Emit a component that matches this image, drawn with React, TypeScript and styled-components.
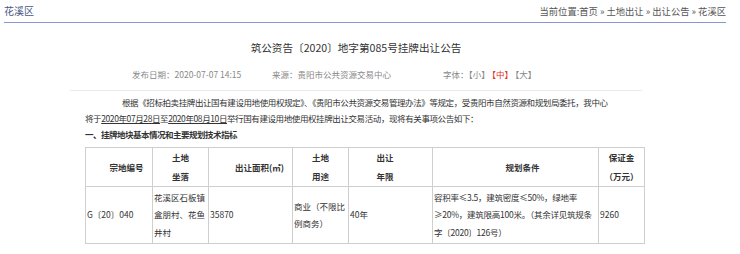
import React from "react";
import styled, { createGlobalStyle } from "styled-components";

const Global = createGlobalStyle`
  html, body { margin: 0; padding: 0; background: #fff; }
  body { font-family: "Noto Sans CJK SC", "Noto Sans", sans-serif; color: #333; }
`;

const Page = styled.div`
  width: 740px;
  height: 254px;
  overflow: hidden;
`;

const TopBar = styled.div`
  margin-left: 4px;
  width: 722px;
  height: 21px;
  display: flex;
  justify-content: space-between;
  align-items: center;
  border-bottom: 1px solid #8399cf;
  padding-bottom: 1px;
`;

const AreaName = styled.div`
  font-size: 10px;
  color: #4a5785;
  line-height: 16px;
`;

const Crumbs = styled.div`
  font-size: 9.3px;
  color: #555;
  line-height: 16px;
`;

const Article = styled.div`
  margin-left: 70px;
  width: 572px;
`;

const Title = styled.h1`
  margin: 17px 0 0;
  font-size: 10.6px;
  font-weight: normal;
  line-height: 16px;
  text-align: center;
  color: #333;
`;

const Meta = styled.div`
  margin-top: 10px;
  height: 16px;
  display: flex;
  align-items: center;
  padding-left: 62px;
  font-size: 8.5px;
  color: #888;
`;

const MetaItem = styled.span<{ $w: number }>`
  width: ${(p) => p.$w}px;
  white-space: nowrap;
`;

const SizeLink = styled.span<{ $active?: boolean }>`
  color: ${(p) => (p.$active ? "#e0301e" : "#888")};
  margin-right: 2px;
`;

const Divider = styled.div`
  margin-top: 8px;
  border-top: 1px solid #ececec;
`;

const Body = styled.div`
  padding: 3px 0 0 15px;
  font-size: 8.5px;
  line-height: 16px;
  color: #333;
`;

const Para = styled.p`
  margin: 0;
  text-indent: 37px;
  white-space: nowrap;
  letter-spacing: -0.4px;
`;

const Line = styled.p`
  margin: 0;
  white-space: nowrap;
  letter-spacing: -0.4px;
`;

const U = styled.span`
  text-decoration: underline;
`;

const Heading = styled.p`
  margin: 0;
  font-weight: bold;
  white-space: nowrap;
  letter-spacing: -0.5px;
`;

const Table = styled.table`
  margin-top: 5px;
  border-collapse: collapse;
  table-layout: fixed;
  width: 559px;
  font-size: 8.5px;
  color: #333;
`;

const HeadCell = styled.th<{ $pl?: number; $pr?: number }>`
  border: 1px solid #cfcfcf;
  height: 38px;
  padding: 0 ${(p) => p.$pr ?? 0}px 0 ${(p) => p.$pl ?? 0}px;
  line-height: 19px;
  text-align: center;
  font-weight: bold;
  vertical-align: middle;
`;

const Cell = styled.td<{ $tight?: boolean }>`
  border: 1px solid #cfcfcf;
  height: 56px;
  padding: 0 1px 0 1px;
  line-height: 17.5px;
  text-align: left;
  vertical-align: middle;
  word-break: break-all;
  white-space: ${(p) => (p.$tight ? "nowrap" : "normal")};
  letter-spacing: ${(p) => (p.$tight ? "-0.25px" : "normal")};
  overflow: hidden;
`;

const widths = [67, 56, 84, 56, 84, 166, 46];

export default function App() {
  return (
    <Page>
      <Global />
      <TopBar>
        <AreaName>花溪区</AreaName>
        <Crumbs>当前位置:首页 » 土地出让 » 出让公告 » 花溪区</Crumbs>
      </TopBar>
      <Article>
        <Title>筑公资告〔2020〕地字第085号挂牌出让公告</Title>
        <Meta>
          <MetaItem $w={140}>发布日期：2020-07-07 14:15</MetaItem>
          <MetaItem $w={171}>来源：贵阳市公共资源交易中心</MetaItem>
          <MetaItem $w={110}>
            字体：<SizeLink>【小】</SizeLink>
            <SizeLink $active>【中】</SizeLink>
            <SizeLink>【大】</SizeLink>
          </MetaItem>
        </Meta>
        <Divider />
        <Body>
          <Para>
            根据《招标拍卖挂牌出让国有建设用地使用权规定》、《贵阳市公共资源交易管理办法》等规定，受贵阳市自然资源和规划局委托，我中心
          </Para>
          <Line>
            将于<U>2020年07月28日</U>至<U>2020年08月10日</U>
            举行国有建设用地使用权挂牌出让交易活动，现将有关事项公告如下：
          </Line>
          <Heading>一、挂牌地块基本情况和主要规划技术指标</Heading>
          <Table>
            <colgroup>
              {widths.map((w, i) => (
                <col key={i} style={{ width: w }} />
              ))}
            </colgroup>
            <thead>
              <tr>
                <HeadCell $pl={15}>宗地编号</HeadCell>
                <HeadCell>
                  土地
                  <br />
                  坐落
                </HeadCell>
                <HeadCell $pl={18}>出让面积(㎡)</HeadCell>
                <HeadCell>
                  土地
                  <br />
                  用途
                </HeadCell>
                <HeadCell $pr={11}>
                  出让
                  <br />
                  年限
                </HeadCell>
                <HeadCell $pl={14}>规划条件</HeadCell>
                <HeadCell>
                  保证金
                  <br />
                  （万元）
                </HeadCell>
              </tr>
            </thead>
            <tbody>
              <tr>
                <Cell>G〔20〕040</Cell>
                <Cell>花溪区石板镇盒朋村、花鱼井村</Cell>
                <Cell>35870</Cell>
                <Cell>商业（不限比例商务）</Cell>
                <Cell>40年</Cell>
                <Cell $tight>
                  容积率≤3.5，建筑密度≤50%，绿地率
                  <br />
                  ≥20%，建筑限高100米。（其余详见筑规条
                  <br />
                  字〔2020〕126号）
                </Cell>
                <Cell>9260</Cell>
              </tr>
            </tbody>
          </Table>
        </Body>
      </Article>
    </Page>
  );
}
